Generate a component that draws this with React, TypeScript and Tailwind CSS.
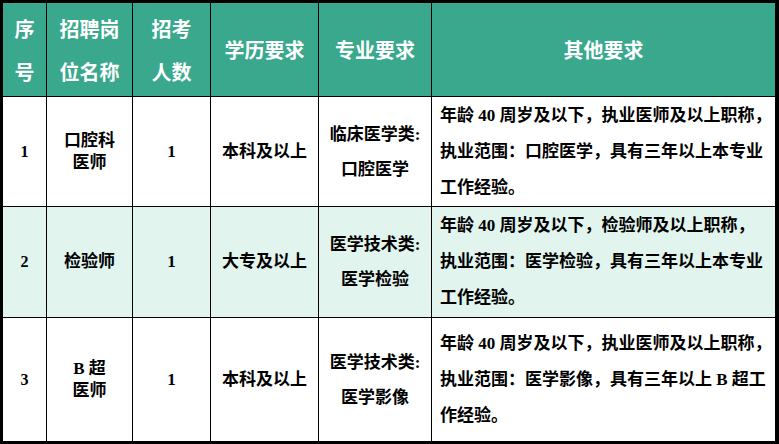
import { Fragment } from 'react'

const head =
  "flex items-center justify-center text-center bg-[#39a88d] text-white font-bold text-[20px] leading-[43px] font-['Noto_Sans_CJK_SC',sans-serif]"
const body = 'flex items-center justify-center text-center text-black font-bold'

type Row = {
  no: string
  post: string[]
  count: string
  edu: string
  major: string[]
  other: string[]
  bg: string
}

const rows: Row[] = [
  {
    no: '1',
    post: ['口腔科', '医师'],
    count: '1',
    edu: '本科及以上',
    major: ['临床医学类:', '口腔医学'],
    other: ['年龄 40 周岁及以下，执业医师及以上职称，', '执业范围：口腔医学，具有三年以上本专业', '工作经验。'],
    bg: 'bg-white',
  },
  {
    no: '2',
    post: ['检验师'],
    count: '1',
    edu: '大专及以上',
    major: ['医学技术类:', '医学检验'],
    other: ['年龄 40 周岁及以下，检验师及以上职称，', '执业范围：医学检验，具有三年以上本专业', '工作经验。'],
    bg: 'bg-[#e1f4ee]',
  },
  {
    no: '3',
    post: ['B 超', '医师'],
    count: '1',
    edu: '本科及以上',
    major: ['医学技术类:', '医学影像'],
    other: ['年龄 40 周岁及以下，执业医师及以上职称，', '执业范围：医学影像，具有三年以上 B 超工', '作经验。'],
    bg: 'bg-white',
  },
]

export default function App() {
  return (
    <div className="w-[779px] h-[444px] grid grid-cols-[43px_85px_77px_107px_112px_343px] grid-rows-[93px_109px_110px_123px] gap-px bg-black pl-[3px] pt-[3px] pr-[4px] pb-[3px] font-['Liberation_Serif','Noto_Sans_CJK_SC',serif]">
      {/* header */}
      <div className={head}>
        <div>序<br />号</div>
      </div>
      <div className={head}>
        <div>招聘岗<br />位名称</div>
      </div>
      <div className={head}>
        <div>招考<br />人数</div>
      </div>
      <div className={head}>学历要求</div>
      <div className={head}>专业要求</div>
      <div className={head}>其他要求</div>

      {rows.map((r) => (
        <Fragment key={r.no}>
          <div className={`${body} ${r.bg} text-[16px]`}>{r.no}</div>
          <div className={`${body} ${r.bg} text-[17px] leading-[22px]`}>
            <div>
              {r.post.map((p) => (
                <div key={p}>{p}</div>
              ))}
            </div>
          </div>
          <div className={`${body} ${r.bg} text-[17px]`}>{r.count}</div>
          <div className={`${body} ${r.bg} text-[17px]`}>{r.edu}</div>
          <div className={`${body} ${r.bg} text-[17px] leading-[35px]`}>
            <div>
              {r.major.map((m) => (
                <div key={m}>{m}</div>
              ))}
            </div>
          </div>
          <div className={`${r.bg} flex items-center pl-[8px] text-black font-bold text-[17px] leading-[36px] whitespace-nowrap`}>
            <div>
              {r.other.map((o) => (
                <div key={o}>{o}</div>
              ))}
            </div>
          </div>
        </Fragment>
      ))}
    </div>
  )
}
